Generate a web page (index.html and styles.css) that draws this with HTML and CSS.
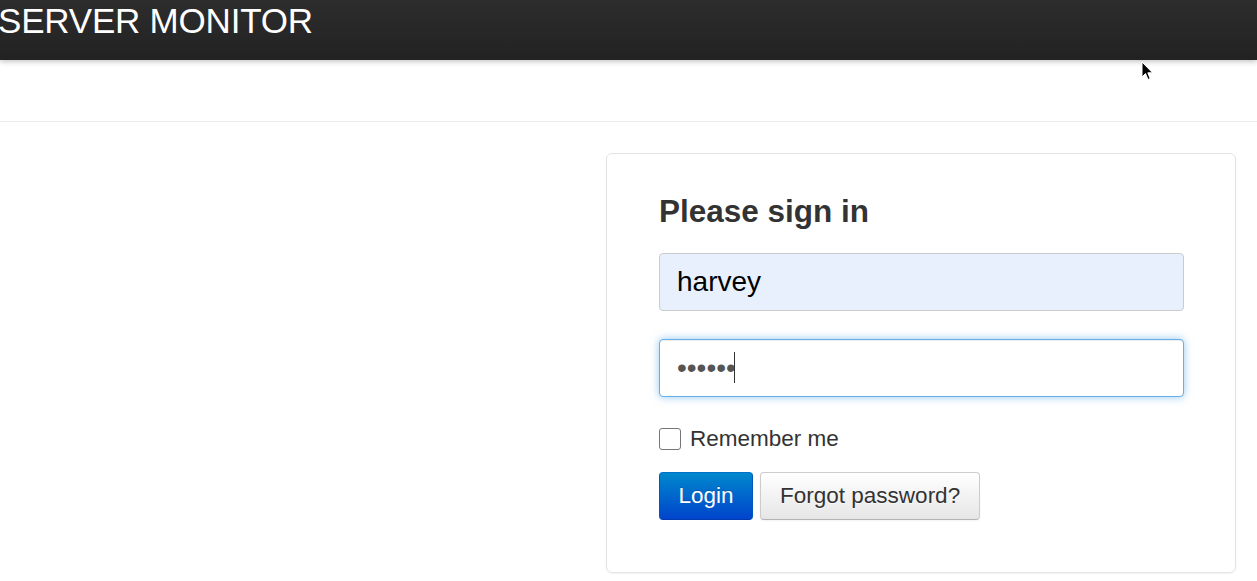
FILE: index.html
```html
<!DOCTYPE html>
<html lang="en">
<head>
<meta charset="utf-8">
<title>Server Monitor - Sign in</title>
<link rel="stylesheet" href="styles.css">
</head>
<body>
<header class="navbar">
  <span class="brand">SERVER MONITOR</span>
</header>
<div class="subnav"></div>
<main class="page">
  <div class="spacer"></div>
  <form class="signin">
    <h2 class="signin-title">Please sign in</h2>
    <input class="field field-autofill" type="text" value="harvey">
    <div class="field-wrap">
      <input class="field field-focus" type="password" value="secret">
      <span class="caret"></span>
    </div>
    <label class="remember"><span class="checkbox"></span><span>Remember me</span></label>
    <div class="actions">
      <button class="btn btn-primary" type="button">Login</button>
      <button class="btn btn-default" type="button">Forgot password?</button>
    </div>
  </form>
</main>
<svg class="cursor" width="14" height="22" viewBox="0 0 14 22"><path d="M1 1 L1 16 L4.5 12.5 L7 18.5 L9.2 17.6 L6.8 11.8 L11.5 11.8 Z" fill="#000" stroke="#fff" stroke-width="1"/></svg>
</body>
</html>
```

FILE: styles.css
```css
* { box-sizing: border-box; }
html, body { margin: 0; padding: 0; }
body {
  font-family: "Liberation Sans", Helvetica, Arial, sans-serif;
  color: #333;
  background: #fff;
  width: 1257px;
  height: 581px;
  overflow: hidden;
  position: relative;
}
.navbar {
  height: 60px;
  background: linear-gradient(#2d2d2d, #222);
  box-shadow: 0 2px 5px rgba(0,0,0,0.22);
  position: relative;
  z-index: 2;
}
.brand {
  display: block;
  color: #fff;
  font-size: 35px;
  line-height: 42px;
  margin-left: -2px;
  letter-spacing: -0.2px;
}
.subnav {
  height: 62px;
  border-bottom: 1px solid #eaeaea;
}
.page {
  display: flex;
  padding-top: 31px;
}
.spacer { width: 606px; flex: none; }
.signin {
  width: 630px;
  flex: none;
  border: 1px solid #e3e3e3;
  border-radius: 6px;
  box-shadow: 0 1px 2px rgba(0,0,0,0.05);
  padding: 37px 51px 52px 52px;
  display: flex;
  flex-direction: column;
}
.signin-title {
  font-size: 31.5px;
  line-height: 40px;
  font-weight: bold;
  margin: 0 0 22px;
  color: #333;
}
.field {
  display: block;
  width: 100%;
  height: 58px;
  border: 1px solid #cbcbcb;
  border-radius: 4px;
  padding: 0 17px;
  font-family: inherit;
  font-size: 28px;
  color: #555;
  outline: none;
  background: #fff;
}
.field-autofill {
  background: #e8f0fe;
  color: #000;
  margin-bottom: 28px;
}
.field-wrap { position: relative; }
.field-focus {
  border-color: #66afe9;
  box-shadow: inset 0 1px 1px rgba(0,0,0,0.075), 0 0 9px rgba(102,175,233,0.7);
  color: #555;
}
.caret {
  position: absolute;
  left: 75px;
  top: 13px;
  width: 1px;
  height: 31px;
  background: #333;
}
.remember {
  display: flex;
  align-items: center;
  height: 26px;
  margin-top: 29px;
  font-size: 22.5px;
  line-height: 26px;
  color: #333;
}
.checkbox {
  width: 22px;
  height: 22px;
  border: 1px solid #767676;
  border-radius: 3px;
  background: #fff;
  margin-right: 9px;
  flex: none;
}
.actions {
  display: flex;
  gap: 7px;
  margin-top: 20px;
}
.btn {
  height: 48px;
  padding: 0 19px;
  font-family: inherit;
  font-size: 22.5px;
  border-radius: 4px;
  cursor: pointer;
}
.btn-primary {
  padding: 0 18.5px;
  color: #fff;
  background: linear-gradient(#0088cc, #0044cc);
  border: 1px solid rgba(0,0,0,0.12);
  border-color: #0070c8 #0055c0 #003bb0;
  text-shadow: 0 -1px 0 rgba(0,0,0,0.2);
}
.btn-default {
  color: #333;
  background: linear-gradient(#ffffff, #e6e6e6);
  border: 1px solid #cccccc;
  border-bottom-color: #b3b3b3;
  box-shadow: inset 0 1px 0 rgba(255,255,255,0.2), 0 1px 2px rgba(0,0,0,0.05);
  text-shadow: 0 1px 1px rgba(255,255,255,0.75);
}
.cursor {
  position: absolute;
  left: 1141px;
  top: 61px;
  z-index: 5;
}
```
